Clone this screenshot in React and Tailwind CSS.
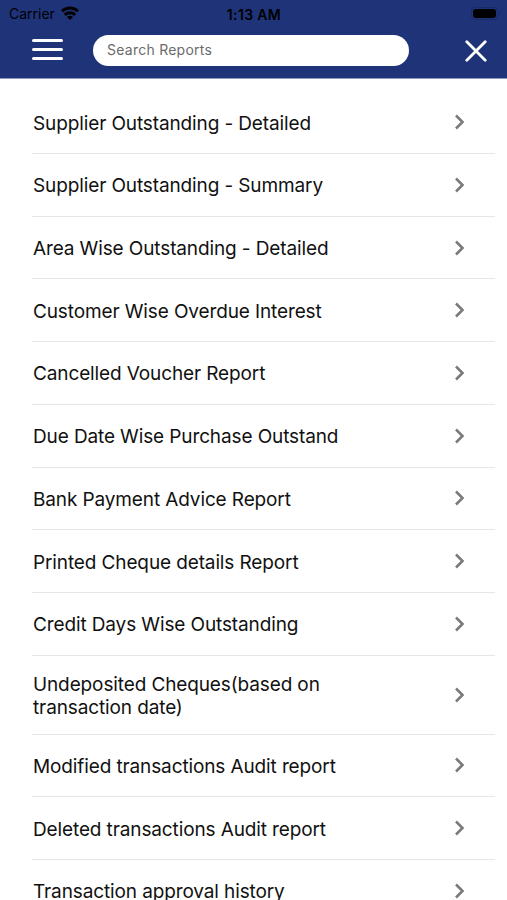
const reports = [
  "Supplier Outstanding - Detailed",
  "Supplier Outstanding - Summary",
  "Area Wise Outstanding - Detailed",
  "Customer Wise Overdue Interest",
  "Cancelled Voucher Report",
  "Due Date Wise Purchase Outstand",
  "Bank Payment Advice Report",
  "Printed Cheque details Report",
  "Credit Days Wise Outstanding",
  "Undeposited Cheques(based on transaction date)",
  "Modified transactions Audit report",
  "Deleted transactions Audit report",
  "Transaction approval history",
];

const WifiIcon = () => (
  <svg className="mb-[2px] ml-[6px] h-[14px] w-[18px]" viewBox="0 0 18 14" fill="none" stroke="#000" strokeWidth="2.9">
    <path d="M1 5.2C5.5 0.9 12.5 0.9 17 5.2" />
    <path d="M3.8 8.8C6.8 6.1 11.2 6.1 14.2 8.8" />
    <path d="M6 11C7.8 9.4 10.2 9.4 12 11L9 14Z" fill="#000" stroke="none" />
  </svg>
);

const StatusBar = () => (
  <div className="grid h-7 grid-cols-3 items-center pl-[9px] pr-[7px] text-[14px] text-black">
    <div className="flex items-center">
      <span className="mb-[2px]">Carrier</span>
      <WifiIcon />
    </div>
    <span className="-ml-px text-center text-[14px] font-semibold tracking-[0.35px]">1:13 AM</span>
    {/* battery */}
    <div className="mb-[2px] flex items-center justify-self-end">
      <div className="h-[13px] w-[27px] rounded-[4px] border border-[#182a68] p-px">
        <div className="h-full rounded-[3px] bg-black" />
      </div>
      <div className="ml-px h-1 w-px rounded-r bg-[#182a68]" />
    </div>
  </div>
);

const App = () => {
  return (
    <div className="h-[900px] w-[507px] overflow-hidden bg-white font-['Inter',sans-serif]">
      <header className="h-[79px] border-b border-[#8d98c2] bg-[#1f3379]">
        <StatusBar />
        <div className="flex h-[45px] items-center pl-8 pr-5">
          <button className="mb-[3px] flex w-[31px] flex-col gap-[6px]" aria-label="Menu">
            <span className="h-[3px] rounded-full bg-white" />
            <span className="h-[3px] rounded-full bg-white" />
            <span className="h-[3px] rounded-full bg-white" />
          </button>
          <input
            className="ml-[30px] h-[31px] w-[316px] rounded-full bg-white px-[14px] pb-[3px] text-[14px] tracking-[0.25px] outline-none placeholder:text-[#6b6b6b]"
            placeholder="Search Reports"
          />
          <button className="ml-auto" aria-label="Close">
            <svg className="size-[22px]" viewBox="0 0 22 22" stroke="#fff" strokeWidth="2.8" strokeLinecap="round">
              <path d="M1.8 1.8L20.2 20.2M20.2 1.8L1.8 20.2" />
            </svg>
          </button>
        </div>
      </header>
      <ul className="pt-[12.4px]">
        {reports.map((name) => (
          <li
            key={name}
            className="ml-8 mr-3 flex min-h-[62.7px] items-center justify-between border-b border-[#e6e6e6] pb-[15px] pl-px pr-[30px] pt-[17px] text-[19px] leading-[23px] tracking-[-0.12px] text-[#111]"
          >
            <span className="w-[320px]">{name}</span>
            <svg className="mb-[2px] h-4 w-[11px]" viewBox="0 0 11 16" fill="none" stroke="#7b7b7b" strokeWidth="2.6">
              <path d="M2 1.5L8.5 8L2 14.5" />
            </svg>
          </li>
        ))}
      </ul>
    </div>
  );
};

export default App;
